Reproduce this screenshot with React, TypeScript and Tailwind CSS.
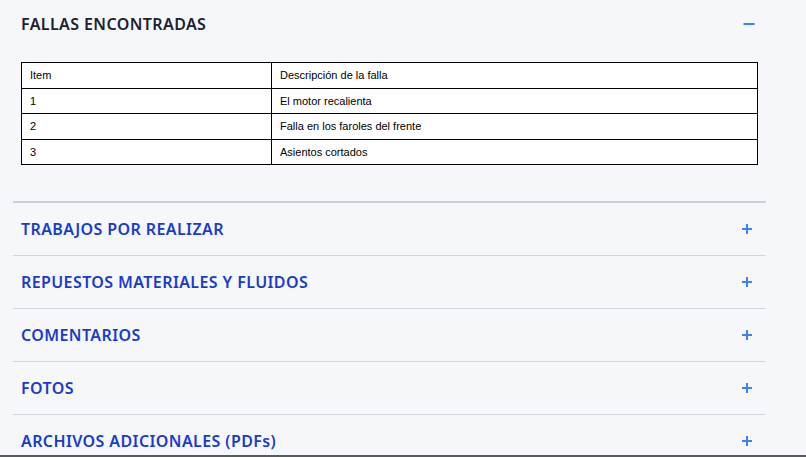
import React from 'react';

const faults = [
  { item: '1', desc: 'El motor recalienta' },
  { item: '2', desc: 'Falla en los faroles del frente' },
  { item: '3', desc: 'Asientos cortados' },
];

const sections = [
  'TRABAJOS POR REALIZAR',
  'REPUESTOS MATERIALES Y FLUIDOS',
  'COMENTARIOS',
  'FOTOS',
  'ARCHIVOS ADICIONALES (PDFs)',
];

function PlusIcon() {
  return (
    <svg width="12" height="12" viewBox="0 0 12 12" className="text-[#3b82f6]">
      <path d="M6 1v10M1 6h10" stroke="currentColor" strokeWidth="2" />
    </svg>
  );
}

function MinusIcon() {
  return (
    <svg width="12" height="12" viewBox="0 0 12 12" className="text-[#3b82f6]">
      <path d="M0.5 6h11" stroke="currentColor" strokeWidth="2" />
    </svg>
  );
}

export default function App() {
  return (
    <div className="h-[457px] bg-[#f5f7fb] border-b-2 border-[#5a5a5a] overflow-hidden font-['Noto_Sans',sans-serif]">
      <div className="w-[753px] ml-[13px]">
        <div className="pb-[36px]">
          <div className="h-[46px] flex items-center justify-between px-2 pt-px">
            <h2 className="text-[16px] font-semibold text-[#1c2230] tracking-[0.4px]">FALLAS ENCONTRADAS</h2>
            <span className="mr-[3px]">
              <MinusIcon />
            </span>
          </div>
          <table className="mx-2 mt-4 w-[737px] border-collapse bg-white font-['Liberation_Sans',Arial,sans-serif] text-[11px] text-black">
            <tbody>
              <tr className="h-[25.5px]">
                <td className="border border-black px-2 w-[250px]">Item</td>
                <td className="border border-black px-2">Descripción de la falla</td>
              </tr>
              {faults.map((f) => (
                <tr key={f.item} className="h-[25.5px]">
                  <td className="border border-black px-2">{f.item}</td>
                  <td className="border border-black px-2">{f.desc}</td>
                </tr>
              ))}
            </tbody>
          </table>
        </div>
        <div className="border-t-2 border-[#cbd1db]">
          {sections.map((s) => (
            <div
              key={s}
              className="h-[53px] flex items-center justify-between px-2 border-b border-[#d2d7df]"
            >
              <h3 className="text-[16px] font-semibold text-[#1a3ccc] tracking-[0.4px]">{s}</h3>
              <span className="mr-[5px]">
                <PlusIcon />
              </span>
            </div>
          ))}
        </div>
      </div>
    </div>
  );
}
